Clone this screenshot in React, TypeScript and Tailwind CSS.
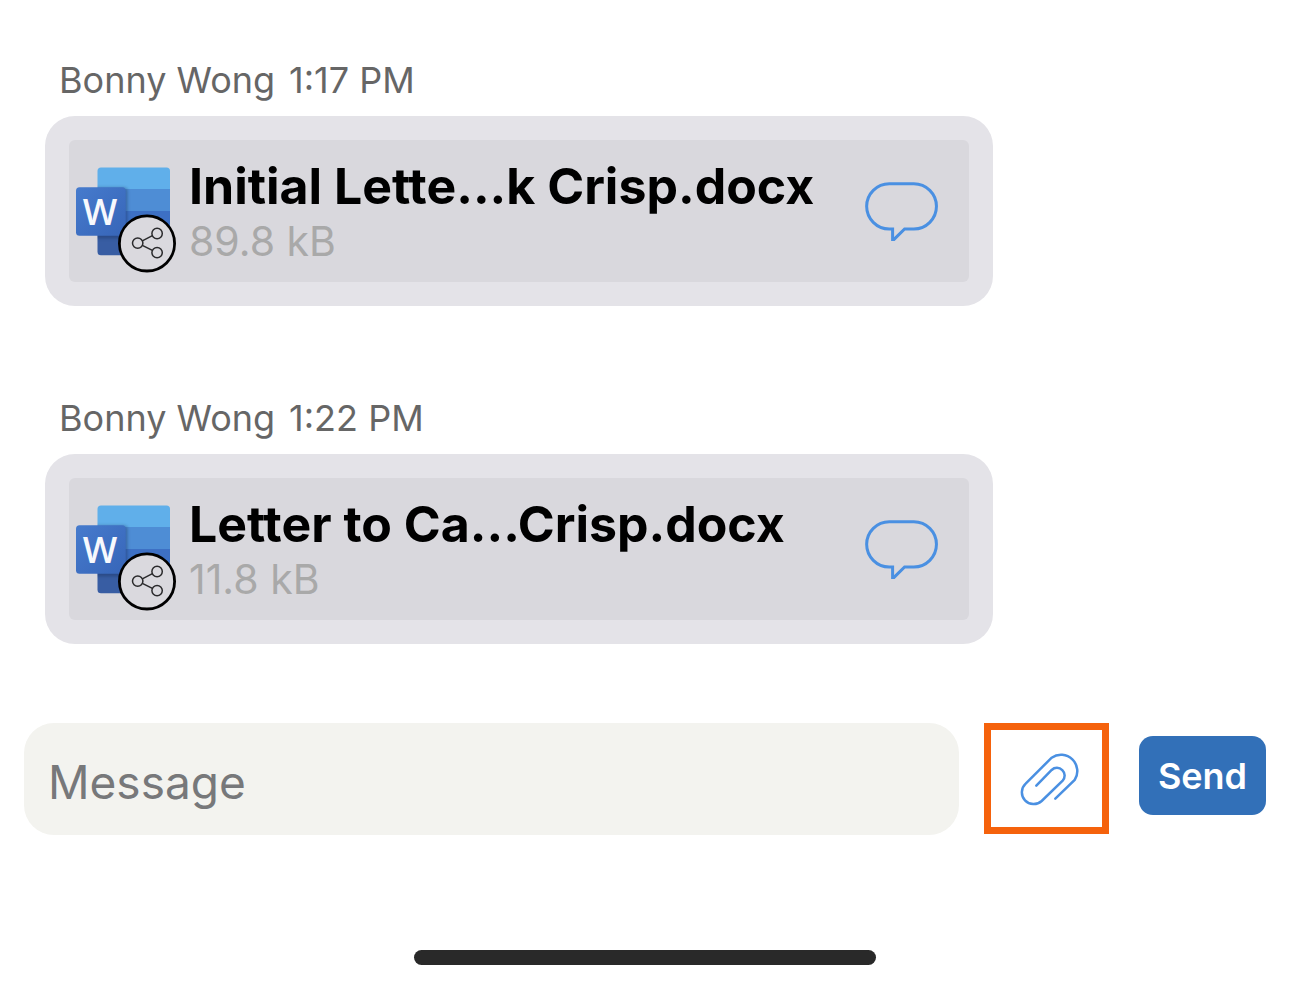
type Attachment = { name: string; size: string };
type Message = { id: number; sender: string; time: string; file: Attachment };

const messages: Message[] = [
  { id: 1, sender: "Bonny Wong", time: "1:17 PM", file: { name: "Initial Lette...k Crisp.docx", size: "89.8 kB" } },
  { id: 2, sender: "Bonny Wong", time: "1:22 PM", file: { name: "Letter to Ca...Crisp.docx", size: "11.8 kB" } },
];

function WordFileIcon() {
  return (
    <svg viewBox="73 155 106 112" className="h-28 w-[106px] shrink-0 overflow-visible" role="img" aria-label="Shared Word document">
      <defs>
        <linearGradient id="tile" x1="0" y1="0" x2="1" y2="1">
          <stop offset="0" stopColor="#467bcd" />
          <stop offset="1" stopColor="#3765b8" />
        </linearGradient>
        <clipPath id="sheet">
          <rect x="97.5" y="167.5" width="72.5" height="87.7" rx="3.5" />
        </clipPath>
        <filter id="soft" x="-20%" y="-20%" width="140%" height="140%">
          <feGaussianBlur stdDeviation="1.4" />
        </filter>
      </defs>
      <g clipPath="url(#sheet)">
        <rect x="97" y="167" width="74" height="22" fill="#60afea" />
        <rect x="97" y="189" width="74" height="22" fill="#4e8dd5" />
        <rect x="97" y="211" width="74" height="22" fill="#3d70c4" />
        <rect x="97" y="233" width="74" height="23" fill="#385da3" />
        <rect x="76" y="187.5" width="51.5" height="51" rx="3.5" fill="#16315f" opacity="0.4" filter="url(#soft)" />
      </g>
      <rect x="76" y="187.3" width="49.7" height="48.4" rx="3.5" fill="url(#tile)" />
      <text x="100" y="224.5" textAnchor="middle" fill="#f7f9fd" fontSize="36.5" fontWeight="600" fontFamily="Open Sans, Noto Sans, sans-serif">
        W
      </text>
      <circle cx="147" cy="243.4" r="27.6" fill="#dad9de" stroke="#000" strokeWidth="2.8" />
      <g fill="none" stroke="#2a2a2c" strokeWidth="1.5">
        <path d="M142.3 240.8 152.4 235.6M142.3 245.3 152.4 250.4" />
        <circle cx="137.7" cy="243.1" r="5.2" />
        <circle cx="157.1" cy="233.5" r="5.2" />
        <circle cx="157.1" cy="252.6" r="5.2" />
      </g>
    </svg>
  );
}

function CommentIcon() {
  return (
    <svg viewBox="865 181 73 61" className="h-[61px] w-[73px]" fill="none" stroke="#4a90e2" strokeWidth="3" aria-hidden="true">
      <path d="M889.3 183.7H913.8A22.6 22.6 0 0 1 913.8 229H904.6L894 239.4H892.6V229H889.3A22.6 22.6 0 0 1 889.3 183.7Z" />
    </svg>
  );
}

function PaperclipIcon() {
  return (
    <svg
      viewBox="150 125 180 162"
      className="h-[54px] w-[60px] overflow-visible"
      fill="none"
      stroke="#4a90e2"
      strokeWidth="7.5"
      strokeLinecap="round"
      aria-hidden="true"
    >
      <path d="M253 265 311 209A49 49 0 0 0 242 142L164 220A34 34 0 0 0 212 272L275 211A23 23 0 0 0 242 179L196 226" />
    </svg>
  );
}

function MessageItem({ sender, time, file }: Message) {
  return (
    <li>
      <p className="flex gap-3.5 pl-3.5 text-[36px] leading-[44px] text-[#666]">
        <span>{sender}</span>
        <time>{time}</time>
      </p>
      <div className="mt-3.5 w-full max-w-[948px] rounded-[30px] bg-[#e4e3e8] p-6">
        <div className="flex h-[142px] items-center rounded-md bg-[#d9d8dd] pl-1 pr-[31px]">
          <WordFileIcon />
          <div className="ml-2.5 min-w-0 flex-1">
            <p className="truncate text-[50px] font-bold leading-[60px] text-black">{file.name}</p>
            <p className="text-[41px] leading-[50px] text-[#a9a9a9]">{file.size}</p>
          </div>
          <button type="button" aria-label="Comment">
            <CommentIcon />
          </button>
        </div>
      </div>
    </li>
  );
}

export default function App() {
  return (
    <main className="flex min-h-screen flex-col bg-white pb-6 pt-[58px] font-['Inter',sans-serif]">
      <ul className="flex flex-col gap-[90px] px-[45px]">
        {messages.map((message) => (
          <MessageItem key={message.id} {...message} />
        ))}
      </ul>

      <form className="mt-[79px] flex items-start px-6" onSubmit={(event) => event.preventDefault()}>
        <input
          type="text"
          aria-label="Message"
          placeholder="Message"
          className="h-28 min-w-0 flex-1 rounded-[30px] bg-[#f3f3ef] px-6 pt-1.5 text-[46px] text-black outline-none placeholder:text-[#77787a]"
        />
        <button
          type="button"
          aria-label="Attach a file"
          className="ml-[25px] flex h-[111px] w-[125px] items-center justify-center border-[7px] border-[#f5620c] pl-2"
        >
          <PaperclipIcon />
        </button>
        <button
          type="submit"
          className="ml-[30px] mt-[13px] h-[79px] w-[127px] rounded-[14px] bg-[#3270b8] text-[36px] font-semibold text-white"
        >
          Send
        </button>
      </form>

      <div className="mx-auto mt-auto h-[15px] w-[462px] rounded-full bg-[#292929]" />
    </main>
  );
}
